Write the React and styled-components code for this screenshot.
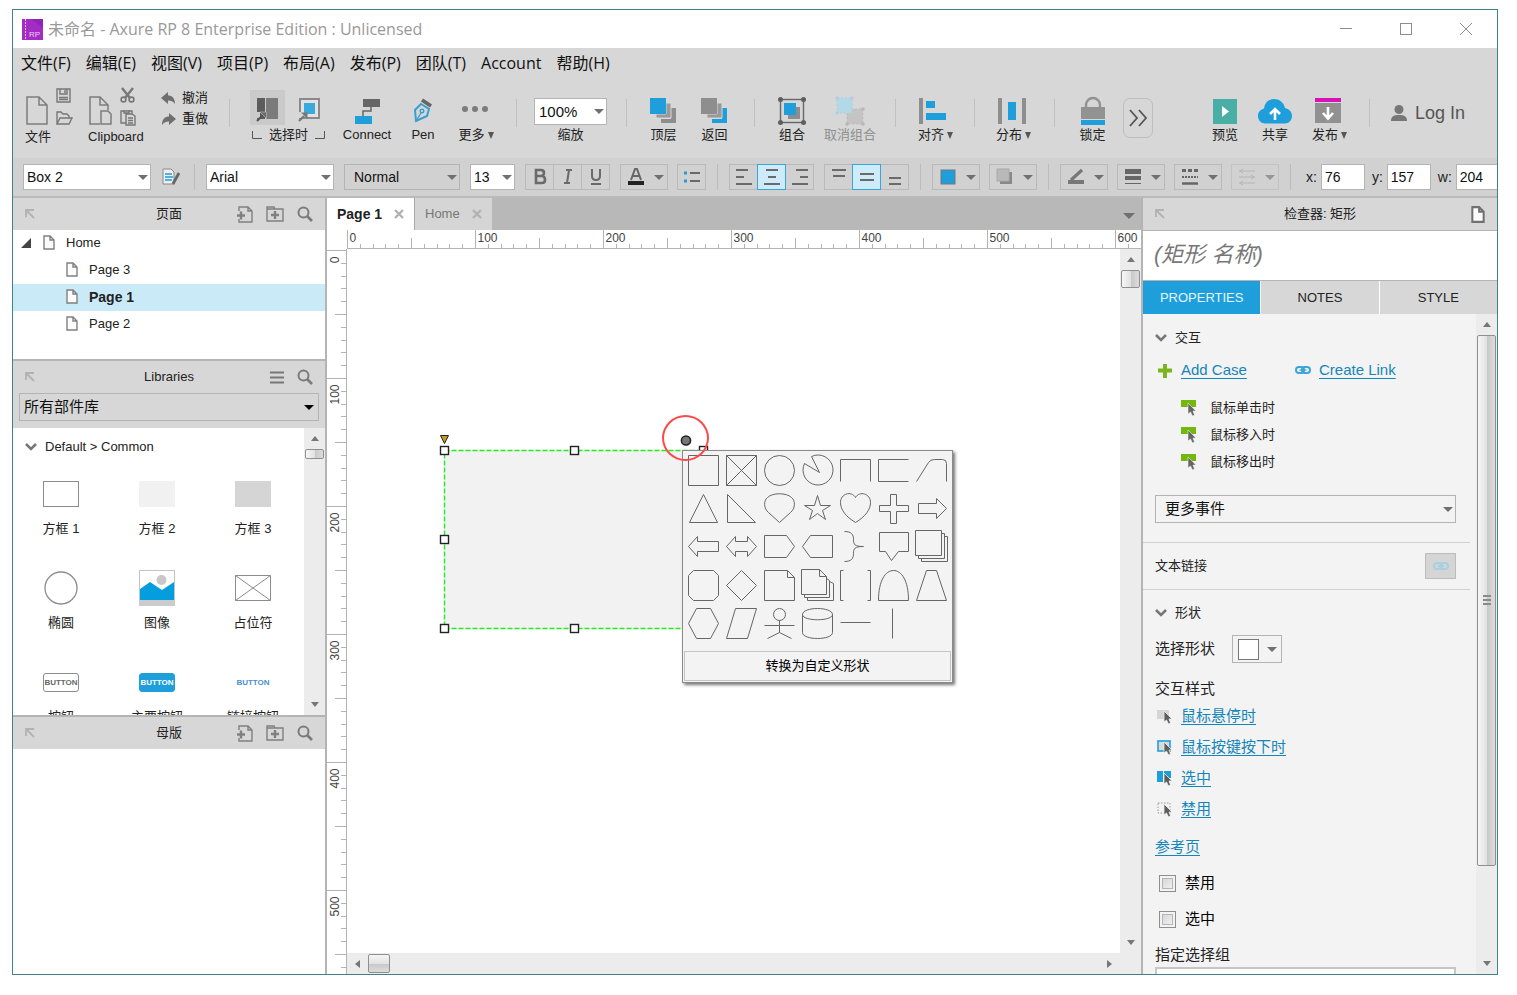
import React, { useEffect, useRef, useState } from 'react';
import styled, { createGlobalStyle, css } from 'styled-components';

const blue = '#1e9fdc';
const gray = '#8c8c8c';
const dark = '#6a6a6a';
const line = '#b4b4b4';
const panel = '#d7d7d7';
const uiFont = '"Liberation Sans", "Noto Sans CJK SC", sans-serif';
const menuFont = '"Open Sans", "Noto Sans CJK SC", sans-serif';
const SCALE = 1.28;

const GlobalStyle = createGlobalStyle`
  * { box-sizing: border-box; }
  body { margin: 0; background: #fff; }
  button, input, select { font: inherit; color: inherit; margin: 0; }
  button { padding: 0; border: 0; background: none; }
  svg { display: block; flex: none; overflow: visible; }
`;

const Window = styled.div`
  display: flex;
  flex-direction: column;
  height: calc(100vh - 29px);
  margin: 9px 19px 20px 12px;
  border: 1px solid #41828a;
  background: ${panel};
  color: #222;
  font: 13px/20px ${uiFont};
  overflow: hidden;
`;

/* title and menu */

const TitleBar = styled.header`
  display: flex;
  align-items: center;
  flex: none;
  height: 38px;
  padding: 0 24px 0 9px;
  gap: 5px;
  background: #fff;
  color: #999;
  font: 16px/24px ${menuFont};
  h1 { flex: 1; margin: 0; font: inherit; white-space: nowrap; }
`;

const WindowButtons = styled.div`
  display: flex;
  gap: 46px;
`;

const MenuBar = styled.nav`
  display: flex;
  align-items: center;
  flex: none;
  gap: 15px;
  height: 30px;
  padding-left: 8px;
  color: #111;
  font: 16px/24px ${menuFont};
`;

/* main toolbar */

const Toolbar = styled.div`
  display: flex;
  align-items: flex-start;
  flex: none;
  height: 80px;
`;

const Section = styled.div`
  display: flex;
  flex: none;
  align-items: flex-start;
  gap: ${p => p.$gap || 0}px;
  padding: 9px ${p => p.$right || 0}px 0 ${p => p.$left || 0}px;
`;

const Spacer = styled.div`
  flex: 1;
`;

const Separator = styled.div`
  flex: none;
  width: 1px;
  height: 28px;
  margin-top: 21px;
  background: #c0c0c0;
`;

const ToolButton = styled.button`
  display: flex;
  flex-direction: column;
  align-items: center;
  flex: none;
  width: ${p => p.$width}px;
  padding-top: 10px;
  color: ${p => (p.disabled ? '#8f8f8f' : '#222')};
  white-space: nowrap;
`;

const IconBox = styled.span`
  display: flex;
  align-items: center;
  justify-content: center;
  height: 28px;
`;

const ToolLabel = styled.span`
  display: flex;
  align-items: center;
  justify-content: center;
  gap: 3px;
  height: 20px;
`;

const FileGroup = styled.div`
  width: ${p => p.$width}px;
`;

const FileIcons = styled.div`
  display: flex;
  gap: 8px;
  height: 40px;
  padding: 7px 0 0 1px;
`;

const SmallIcons = styled.div`
  display: flex;
  flex-direction: column;
  gap: 7px;
  margin-top: -6px;
  button { display: block; height: 15px; }
`;

const UndoColumn = styled.div`
  width: 48px;
  button { display: flex; align-items: center; gap: 6px; height: 21px; white-space: nowrap; }
`;

const ModeGroup = styled.div`
  width: 77px;
`;

const ModeRow = styled.div`
  display: flex;
  gap: 8px;
  padding-top: 3px;
`;

const ModeButton = styled.button`
  display: flex;
  align-items: center;
  justify-content: center;
  width: 35px;
  height: 35px;
  padding-top: 4px;
  background: ${p => (p.$on ? '#cacaca' : 'none')};
`;

const ZoomBox = styled.div`
  width: 73px;
  padding-top: 11px;
  text-align: center;
`;

const ExpandButton = styled.button`
  display: flex;
  align-items: center;
  justify-content: center;
  width: 30px;
  height: 40px;
  margin-top: 11px;
  border: 1px solid #bdbdbd;
  border-radius: 7px;
`;

const LoginButton = styled.button`
  display: flex;
  align-items: center;
  gap: 8px;
  height: 28px;
  margin-top: 12px;
  color: #555;
  font-size: 18px;
  white-space: nowrap;
`;

/* format bar */

const FormatBar = styled.div`
  display: flex;
  align-items: center;
  flex: none;
  gap: 10px;
  height: 40px;
  padding-left: 10px;
  border-bottom: 2px solid #bababa;
  background: #d1d1d1;
  overflow: hidden;
`;

const BarSeparator = styled.div`
  flex: none;
  width: 1px;
  height: 26px;
  margin: 0 1px;
  background: #bcbcbc;
`;

const SelectWrap = styled.div`
  display: grid;
  flex: none;
  align-items: center;
  width: ${p => p.$width || '100%'};
  > * { grid-area: 1 / 1; }
  > svg { justify-self: end; margin-right: ${p => p.$arrow || 3}px; pointer-events: none; }
  select {
    appearance: none;
    width: 100%;
    height: ${p => p.$height || 26}px;
    padding: 0 16px 0 ${p => p.$pad || 3}px;
    border: 1px solid ${line};
    border-radius: 0;
    background: ${p => p.$bg || '#fff'};
    color: #111;
    font-size: ${p => p.$font || 14}px;
  }
`;

const ButtonGroup = styled.div`
  display: flex;
  flex: none;
`;

const FormatButton = styled.button`
  display: flex;
  align-items: center;
  justify-content: ${p => (p.$menu ? 'space-between' : 'center')};
  flex: none;
  width: ${p => (p.$menu ? 48 : 29)}px;
  height: 26px;
  padding: ${p => (p.$menu ? '0 3px 0 7px' : '0')};
  border: 1px solid #b9b9b9;
  opacity: ${p => (p.disabled ? 0.6 : 1)};
  & + & { margin-left: -1px; }
  ${p => p.$on && css`
    position: relative;
    border-color: #3aa5d8;
    background: #cdebf8;
  `}
`;

const Coordinates = styled.div`
  display: flex;
  flex: none;
  gap: 7px;
  padding-left: 4px;
  label { display: flex; align-items: center; gap: 4px; font-size: 14px; }
  input {
    width: 44px;
    height: 26px;
    padding: 0 3px;
    border: 1px solid ${line};
    font-size: 14px;
    color: #111;
  }
`;

/* workspace */

const Workspace = styled.main`
  display: grid;
  grid-template-columns: 314px minmax(0, 1fr) 356px;
  flex: 1;
  min-height: 0;
`;

const Sidebar = styled.aside`
  display: flex;
  flex-direction: column;
  min-height: 0;
  border-right: 2px solid ${line};
  background: #fff;
`;

const PaneHeader = styled.div`
  display: grid;
  grid-template-columns: 82px 1fr 82px;
  align-items: center;
  flex: none;
  height: 32px;
  padding: 0 12px;
  background: ${panel};
  h2 { margin: 0; font: inherit; text-align: center; }
`;

const PaneActions = styled.div`
  display: flex;
  justify-content: flex-end;
  align-items: center;
  gap: 13px;
`;

const Tree = styled.ul`
  flex: none;
  height: 131px;
  margin: 0;
  padding: 0;
  border-bottom: 2px solid ${line};
  list-style: none;
`;

const TreeRow = styled.li`
  display: flex;
  align-items: center;
  gap: 11px;
  height: 27px;
  padding: 0 0 2px ${p => (p.$root ? 8 : 53)}px;
  background: ${p => (p.$on ? '#cbeaf7' : 'none')};
  font-weight: ${p => (p.$on ? 'bold' : 'normal')};
  font-size: ${p => (p.$on ? 14 : 13)}px;
`;

const LibraryPicker = styled.div`
  flex: none;
  padding: 0 6px 7px;
  background: ${panel};
`;

const LibraryBody = styled.div`
  display: grid;
  grid-template-columns: 1fr 21px;
  flex: none;
  height: 289px;
  border-bottom: 2px solid ${line};
  overflow: hidden;
`;

const LibraryList = styled.div`
  min-height: 0;
  overflow: hidden;
`;

const SectionTitle = styled.h3`
  display: flex;
  align-items: center;
  gap: 8px;
  height: ${p => p.$height || 24}px;
  margin: 0;
  padding-left: ${p => p.$left || 0}px;
  font: inherit;
`;

const WidgetGrid = styled.div`
  display: grid;
  grid-template-columns: repeat(3, 1fr);
  grid-auto-rows: 94px;
  padding-right: 3px;
`;

const Widget = styled.button`
  display: flex;
  flex-direction: column;
  align-items: center;
  justify-content: flex-start;
  gap: 7px;
  padding-top: 11px;
  > span:first-child { display: flex; align-items: center; height: 36px; }
`;

const ButtonSample = styled.span`
  width: 36px;
  height: 19px;
  border: 1px solid ${p => p.$border};
  border-radius: 3px;
  background: ${p => p.$bg};
  color: ${p => p.$color};
  font-size: 8px;
  font-weight: bold;
  line-height: 18px;
  text-align: center;
`;

/* scroll bars */

const Track = styled.div`
  display: flex;
  flex-direction: ${p => (p.$horizontal ? 'row' : 'column')};
  align-items: center;
  min-width: 0;
  min-height: 0;
  background: #ececec;
`;

const Arrow = styled.div`
  display: flex;
  align-items: center;
  justify-content: center;
  flex: none;
  width: 21px;
  height: 21px;
`;

const Thumb = styled.div`
  display: flex;
  align-items: center;
  justify-content: center;
  flex: none;
  width: ${p => (p.$horizontal ? p.$size : '19px')};
  height: ${p => (p.$horizontal ? '19px' : p.$size)};
  border: 1px solid #8f8f8f;
  border-radius: 2px;
  background: linear-gradient(${p => (p.$horizontal ? '180deg' : '90deg')}, #f6f6f6, #e2e2e2 50%, #c9c9c9 55%, #dcdcdc);
`;

/* canvas */

const Editor = styled.section`
  display: flex;
  flex-direction: column;
  min-height: 0;
  background: #fff;
`;

const TabBar = styled.div`
  display: flex;
  flex: none;
  height: 32px;
  padding-right: 6px;
  background: #b8b8b8;
`;

const PageTab = styled.button`
  display: flex;
  align-items: center;
  justify-content: space-between;
  width: ${p => p.$width}px;
  padding: 0 10px;
  background: ${p => (p.$on ? '#fff' : '#d5d5d5')};
  color: ${p => (p.$on ? '#222' : '#777')};
  font-size: ${p => (p.$on ? 14 : 13)}px;
  font-weight: ${p => (p.$on ? 'bold' : 'normal')};
  border-left: ${p => (p.$on ? 0 : 1)}px solid #aaa;
`;

const TabMenu = styled.button`
  display: flex;
  align-items: center;
  margin-left: auto;
  padding-top: 4px;
`;

const CanvasGrid = styled.div`
  display: grid;
  grid-template-columns: 20px minmax(0, 1fr) 21px;
  grid-template-rows: 19px minmax(0, 1fr) 21px;
  grid-template-areas:
    'corner top top'
    'side canvas vertical'
    'side horizontal end';
  flex: 1;
  min-height: 0;
  background: #ececec;
`;

const Corner = styled.div`
  grid-area: corner;
  background: #fff;
`;

const TopRuler = styled.div`
  grid-area: top;
  min-width: 0;
  border-bottom: 1px solid ${line};
  background: #fff;
  overflow: hidden;
`;

const SideRuler = styled.div`
  grid-area: side;
  min-height: 0;
  border-right: 1px solid ${line};
  background: #fff;
  overflow: hidden;
`;

const Canvas = styled.div`
  position: relative;
  grid-area: canvas;
  background: #fff;
  overflow: hidden;
`;

const SelectedBox = styled.div`
  position: absolute;
  left: 97px;
  top: 201px;
  width: 262px;
  height: 179px;
  background: #f2f2f2;
`;

const ShapeMenu = styled.div`
  position: absolute;
  left: 335px;
  top: 201px;
  width: 271px;
  padding: 0 1px 1px;
  border: 1px solid #8a8a8a;
  background: #f3f3f3;
  box-shadow: 2px 2px 3px #777;
`;

const ShapeGrid = styled.div`
  display: grid;
  grid-template-columns: repeat(7, 1fr);
  grid-template-rows: repeat(5, 1fr);
  height: 192px;
  button { display: flex; align-items: center; justify-content: center; }
`;

const ConvertButton = styled.button`
  width: 100%;
  height: 30px;
  margin-top: 8px;
  border: 1px solid #c4c4c4;
  color: #000;
`;

const RedCircle = styled.div`
  position: absolute;
  left: 315px;
  top: 166px;
  width: 47px;
  height: 46px;
  border: 2px solid #fa4b4b;
  border-radius: 50%;
  pointer-events: none;
`;

/* inspector */

const Inspector = styled.aside`
  display: flex;
  flex-direction: column;
  min-height: 0;
  border-left: 2px solid ${line};
  background: #fff;
`;

const NameInput = styled.input`
  flex: none;
  height: 51px;
  padding: 0 11px 2px;
  border: solid ${line};
  border-width: 1px 0;
  font-size: 22px;
  font-style: italic;
  &::placeholder { color: #777; opacity: 1; }
`;

const InspectorTabs = styled.div`
  display: grid;
  grid-template-columns: repeat(3, 1fr);
  flex: none;
  gap: 1px;
  height: 33px;
`;

const InspectorTab = styled.button`
  background: ${p => (p.$on ? blue : panel)};
  color: ${p => (p.$on ? '#e6f5fc' : '#222')};
`;

const InspectorBody = styled.div`
  display: grid;
  grid-template-columns: minmax(0, 1fr) 21px;
  flex: 1;
  min-height: 0;
  background: #f3f3f3;
`;

const Properties = styled.div`
  padding: 12px 6px 0 0;
  overflow: hidden;
`;

const Block = styled.div`
  padding: ${p => p.$top || 0}px 14px ${p => p.$bottom || 0}px 12px;
  border-bottom: ${p => (p.$line ? 1 : 0)}px solid #cfcfcf;
`;

const Row = styled.div`
  display: flex;
  align-items: center;
  gap: ${p => p.$gap || 8}px;
  height: ${p => p.$height || 24}px;
  margin-top: ${p => p.$top || 0}px;
  padding-left: ${p => p.$indent || 0}px;
  font-size: ${p => (p.$small ? 13 : 15)}px;
`;

const Link = styled.a`
  color: #1586b8;
  font-size: 15px;
  text-decoration: underline;
  text-underline-offset: 3px;
`;

const LinkPair = styled.div`
  display: grid;
  grid-template-columns: 138px 1fr;
`;

const LinkButton = styled.button`
  display: flex;
  align-items: center;
  justify-content: center;
  width: 31px;
  height: 26px;
  margin-left: auto;
  border: 1px solid #bcbcbc;
  background: #d5d5d5;
`;

const ShapeButton = styled.button`
  display: flex;
  align-items: center;
  justify-content: space-between;
  width: 50px;
  height: 28px;
  margin-left: 9px;
  padding: 0 4px 0 5px;
  border: 1px solid ${line};
`;

const Check = styled.label`
  display: flex;
  align-items: center;
  gap: 9px;
  height: 24px;
  margin-top: ${p => p.$top}px;
  padding-left: 4px;
  color: #000;
  font-size: 15px;
  input {
    appearance: none;
    width: 17px;
    height: 17px;
    border: 1px solid #8e8e8e;
    background: linear-gradient(135deg, #ccd0d6, #f6f6f6);
    box-shadow: inset 0 0 0 2px #f3f3f3, inset 0 0 0 3px #b5b5b5;
  }
`;

const GroupInput = styled.input`
  display: block;
  width: 100%;
  height: 26px;
  border: 2px solid #c6c6c6;
  background: #fff;
`;

/* icons */

const Caret = ({ color = '#707070', size = 10 }) => (
  <svg width={size} height={size / 2} viewBox="0 0 10 5"><path d="M0 0H10L5 5Z" fill={color} /></svg>
);

const DownMark = () => (
  <svg width="6" height="7" viewBox="0 0 6 7"><path d="M0 0H6L3 7Z" fill="#555" /></svg>
);

const Chevron = () => (
  <svg width="12" height="8" viewBox="0 0 12 8"><path d="M1 1L6 6L11 1" fill="none" stroke="#777" strokeWidth="2.6" /></svg>
);

const DockIcon = () => (
  <svg width="10" height="10" viewBox="0 0 10 10" fill="none" stroke="#b2b2b2" strokeWidth="1.8">
    <path d="M1 8V1H9M1 1L9 9" />
  </svg>
);

const SearchIcon = () => (
  <svg width="16" height="16" viewBox="0 0 16 16" fill="none" stroke="#7b7b7b">
    <circle cx="6.5" cy="6.5" r="5" strokeWidth="2" /><path d="M10 10L15 15" strokeWidth="2.6" />
  </svg>
);

const AddPageIcon = () => (
  <svg width="16" height="17" viewBox="0 0 16 17" fill="none" stroke="#808080" strokeWidth="1.4">
    <path d="M2 5V1H11L15 5V16H2V13M11 1V5H15" /><path d="M0 9.5H8M4 5.5V13.5" strokeWidth="2.4" />
  </svg>
);

const AddFolderIcon = () => (
  <svg width="18" height="16" viewBox="0 0 18 16" fill="none" stroke="#808080" strokeWidth="1.4">
    <path d="M1 15V1H8L9 3H17V15ZM1 3H9" /><path d="M5 9H13M9 5V13" strokeWidth="2.4" />
  </svg>
);

const ListIcon = () => (
  <svg width="14" height="13" viewBox="0 0 14 13" stroke="#777" strokeWidth="2.2"><path d="M0 1.5H14M0 6.5H14M0 11.5H14" /></svg>
);

const PageIcon = ({ width = 12, height = 15, stroke = '#808080', strokeWidth = 1.4 }) => (
  <svg width={width} height={height} viewBox="0 0 12 15" fill="#fbfbfb" stroke={stroke} strokeWidth={strokeWidth}>
    <path d="M1 1H7L11 5V14H1ZM7 1V5H11" />
  </svg>
);

const Logo = () => (
  <svg width="21" height="21" viewBox="0 0 21 21">
    <rect width="21" height="21" fill="#a32cc4" />
    <path d="M9 0H21V9Z" fill="#8a22ad" opacity=".7" />
    <path d="M3.5 0V21" stroke="#e6b6f2" strokeDasharray="2 1" />
    <text x="7" y="18" fill="#f0d2f8" fontSize="8" fontFamily="Liberation Sans">RP</text>
  </svg>
);

const FileIcon = () => (
  <svg width="22" height="29" viewBox="0 0 22 29" fill="none" stroke="#7d7d7d" strokeWidth="1.5">
    <path d="M1 1H13L21 9V28H1ZM13 1V9H21" />
  </svg>
);

const SaveIcon = () => (
  <svg width="15" height="15" viewBox="0 0 15 15" fill="none" stroke="#777" strokeWidth="1.4">
    <path d="M1 1H14V14H1ZM4 1V6H11V1M9 2V5M3 9.500H12M3 11.500H12" />
  </svg>
);

const OpenIcon = () => (
  <svg width="17" height="14" viewBox="0 0 17 14" fill="none" stroke="#777" strokeWidth="1.4">
    <path d="M1 13V1H5L7 3H11L13 5V7M1 13L4 7H16L13 13Z" />
  </svg>
);

const ClipIcon = () => (
  <svg width="23" height="29" viewBox="0 0 23 29" fill="none" stroke="#7d7d7d" strokeWidth="1.5">
    <path d="M11 28H1V1H11L19 9V14M11 1V9H19M12 15H19L22 18V28H12Z" />
  </svg>
);

const ScissorsIcon = () => (
  <svg width="15" height="15" viewBox="0 0 15 15" fill="none" stroke="#777" strokeWidth="2.4">
    <path d="M2 0L10 10M13 0L5 10" /><circle cx="3.5" cy="11.5" r="2.4" strokeWidth="1.6" /><circle cx="11.5" cy="11.5" r="2.4" strokeWidth="1.6" />
  </svg>
);

const PasteIcon = () => (
  <svg width="16" height="15" viewBox="0 0 16 15" fill="none" stroke="#777" strokeWidth="1.4">
    <path d="M6 13H1V1H12V4M4 0V3H9V0M6 4H12L15 6V15H6ZM8 8H13M8 10.500H13M8 13H13" />
  </svg>
);

const UndoIcon = ({ flip }) => (
  <svg width="15" height="12" viewBox="0 0 15 12">
    <path d="M0 6L7 0V3.500C11 3.500 14 6 14 12C12 9 10 8.500 7 8.500V12Z" fill="#6f6f6f" transform={flip ? 'translate(15 0) scale(-1 1)' : undefined} />
  </svg>
);

const IntersectIcon = () => (
  <svg width="21" height="23" viewBox="0 0 21 23">
    <rect width="8" height="21" fill="#5c5c5c" /><rect x="9" width="12" height="21" fill="#7b7b7b" />
    <path d="M0 14H3V20H0Z" fill="#cacaca" />
    <path d="M0 23L6 17" stroke="#555" strokeWidth="2.2" /><path d="M3 14H9.500V20.500Z" fill="#6b6b6b" stroke="#a9a9a9" strokeWidth=".8" />
  </svg>
);

const ContainIcon = () => (
  <svg width="21" height="23" viewBox="0 0 21 23">
    <rect x="1" y="1" width="19" height="19" fill="#e2e2e2" stroke="#8a8a8a" strokeWidth="2" />
    <rect x="5" y="5" width="11" height="11" fill="#38aade" />
    <path d="M0 14H3V20H0Z" fill={panel} />
    <path d="M0 23L5 18" stroke="#777" strokeWidth="2.2" /><path d="M2 14.500H8.500V21Z" fill="#777" />
  </svg>
);

const SelectLabelIcon = ({ right }) => (
  <svg width="10" height="8" viewBox="0 0 10 8" fill="none" stroke="#555"><path d={right ? 'M9.500 0V7.500H0' : 'M.5 0V7.500H10'} /></svg>
);

const ConnectIcon = () => (
  <svg width="25" height="25" viewBox="0 0 25 25">
    <rect x="8" width="17" height="8" fill="#666" /><rect y="17" width="17" height="8" fill={blue} />
    <path d="M16 8V12H8V17" fill="none" stroke="#666" strokeWidth="1.5" />
  </svg>
);

const PenIcon = () => (
  <svg width="18" height="24" viewBox="0 0 18 24">
    <path d="M8 1L17 7" stroke="#666" strokeWidth="3.8" />
    <path d="M7 5L15 10L13 17L2 22L1 11Z" fill="none" stroke="#3a9fd0" strokeWidth="2" />
    <path d="M2 22L7 14" stroke="#3a9fd0" strokeWidth="1.4" /><circle cx="8" cy="12" r="1.8" fill="none" stroke="#3a9fd0" strokeWidth="1.4" />
  </svg>
);

const DotsIcon = () => (
  <svg width="28" height="8" viewBox="0 0 28 8" fill="#7c7c7c"><circle cx="3" cy="2" r="3" /><circle cx="13" cy="2" r="3" /><circle cx="23" cy="2" r="3" /></svg>
);

const LayerIcon = ({ back }) => (
  <svg width="27" height="26" viewBox="0 0 27 26">
    <path d="M21 10H26V25H11V21H21Z" fill={back ? blue : '#8e8e8e'} />
    <path d="M16 5H21V20H6V16H16Z" fill="#999" stroke={panel} />
    <rect width="16" height="16" fill={back ? '#8e8e8e' : blue} />
  </svg>
);

const GroupIcon = () => (
  <svg width="28" height="28" viewBox="0 0 28 28">
    <rect x="10" y="10" width="12" height="12" fill="#8d8d8d" /><rect x="6" y="6" width="12" height="12" fill={blue} />
    <rect x="2.500" y="2.500" width="23" height="23" fill="none" stroke="#666" strokeWidth="1.4" />
    <g fill="#5e5e5e"><circle cx="2.500" cy="2.500" r="2.500" /><circle cx="25.500" cy="2.500" r="2.500" /><circle cx="2.500" cy="25.500" r="2.500" /><circle cx="25.500" cy="25.500" r="2.500" /></g>
  </svg>
);

const UngroupIcon = () => (
  <svg width="28" height="28" viewBox="0 0 28 28">
    <path d="M11 12H27V27H11Z" fill="#c4c4c4" stroke="#bcbcbc" strokeDasharray="2 2" />
    <rect x="1" y="1" width="15" height="15" fill="#b3d8e8" stroke="#b0cedb" strokeDasharray="2 2" />
    <g fill="#b8cdd6"><circle cx="1" cy="1" r="1.800" /><circle cx="16" cy="1" r="1.800" /><circle cx="1" cy="16" r="1.800" /></g>
    <g fill="#b8b8b8"><circle cx="27" cy="12" r="1.800" /><circle cx="27" cy="27" r="1.800" /><circle cx="11" cy="27" r="1.800" /></g>
  </svg>
);

const AlignIcon = () => (
  <svg width="33" height="27" viewBox="0 0 33 27">
    <rect width="4" height="26" fill="#8e8e8e" /><rect x="7" y="3" width="9" height="7" fill={blue} /><rect x="7" y="15" width="20" height="7" fill={blue} />
  </svg>
);

const DistributeIcon = () => (
  <svg width="31" height="27" viewBox="0 0 31 27">
    <rect width="4" height="26" fill="#8e8e8e" /><rect x="24" width="4" height="26" fill="#8e8e8e" /><rect x="10" y="4" width="8" height="18" fill={blue} />
  </svg>
);

const LockIcon = () => (
  <svg width="24" height="28" viewBox="0 0 24 28">
    <path d="M5 11V8A7 7 0 0 1 19 8V11" fill="none" stroke="#929292" strokeWidth="2.4" />
    <rect y="10" width="24" height="12" fill="#929292" /><rect y="23" width="24" height="5" fill={blue} />
  </svg>
);

const MoreIcon = () => (
  <svg width="19" height="16" viewBox="0 0 19 16" fill="none" stroke="#555" strokeWidth="1.8"><path d="M1 0L8 8L1 16M10 0L17 8L10 16" /></svg>
);

const PreviewIcon = () => (
  <svg width="24" height="25" viewBox="0 0 24 25"><rect width="24" height="25" fill="#49aea5" /><path d="M9 7L16 12.500L9 18Z" fill="#fff" /></svg>
);

const ShareIcon = () => (
  <svg width="34" height="25" viewBox="0 0 34 25">
    <path d="M7 24.500C3 24.500 0 21 0 17C0 13 2 11 6 9.500C7 3 11 0 16 0C22 0 26 4 27 9C31 10 34 12.500 34 17C34 21 31 24.500 27 24.500Z" fill={blue} />
    <path d="M17 21V11M12 15L17 10L22 15" fill="none" stroke="#fff" strokeWidth="2.6" />
  </svg>
);

const PublishIcon = () => (
  <svg width="32" height="26" viewBox="0 0 32 26">
    <rect x="2" width="26" height="4" fill="#d813b6" /><rect x="2" y="5" width="26" height="20" fill="#919191" />
    <path d="M15 9V20M10 15L15 20.500L20 15" fill="none" stroke="#fff" strokeWidth="2.6" />
  </svg>
);

const UserIcon = () => (
  <svg width="16" height="17" viewBox="0 0 16 17" fill="#777"><circle cx="8" cy="4.500" r="4.500" /><path d="M0 16C0 11 3 10 8 10S16 11 16 16Z" /></svg>
);

const StyleIcon = () => (
  <svg width="22" height="18" viewBox="0 0 22 18" fill="none">
    <path d="M2 1H10L13 4V16H2Z" fill="#eee" stroke="#888" /><path d="M4 6H11M4 9H12M4 12H11" stroke={blue} strokeWidth="1.6" />
    <path d="M18 5L13 14L12 16" stroke="#666" strokeWidth="2.8" />
  </svg>
);

const ListStyleIcon = () => (
  <svg width="16" height="12" viewBox="0 0 16 12" stroke={dark} strokeWidth="2"><path d="M6 2H16M6 10H16" /><path d="M0 2H3M0 10H3" stroke={blue} strokeWidth="3" /></svg>
);

const Lines = ({ d, weight = 2 }) => (
  <svg width="16" height="18" viewBox="0 0 16 18" fill="none" stroke={dark} strokeWidth={weight}><path d={d} /></svg>
);

const FontColorIcon = () => (
  <svg width="16" height="18" viewBox="0 0 16 18">
    <path d="M3 12L7 1H9L13 12M5 8H11" fill="none" stroke="#666" strokeWidth="2" /><rect y="13" width="16" height="4" fill="#222" />
  </svg>
);

const FillIcon = () => (
  <svg width="16" height="16" viewBox="0 0 16 16"><rect x="1" y="1" width="14" height="14" fill={blue} stroke="#777" /></svg>
);

const ShadowIcon = () => (
  <svg width="16" height="16" viewBox="0 0 16 16"><rect x="3" y="3" width="12" height="12" fill="#888" /><rect width="12" height="12" fill="#b9b9b9" stroke="#aaa" /></svg>
);

const LineColorIcon = () => (
  <svg width="16" height="16" viewBox="0 0 16 16"><path d="M0 13H16" stroke="#777" strokeWidth="4" /><path d="M3 11L14 1" stroke="#777" strokeWidth="3.2" /></svg>
);

const LineWidthIcon = () => (
  <svg width="16" height="16" viewBox="0 0 16 16" fill="#666"><rect width="16" height="5" /><rect y="7" width="16" height="4" /><rect y="14" width="16" height="1" /></svg>
);

const LineStyleIcon = () => (
  <svg width="16" height="16" viewBox="0 0 16 16" stroke="#666"><path d="M0 1.500H16" strokeWidth="3" strokeDasharray="4 2" /><path d="M0 8H16" strokeWidth="2" strokeDasharray="2 1" /><path d="M0 14.500H16" strokeWidth="2.500" /></svg>
);

const LineEndIcon = () => (
  <svg width="16" height="16" viewBox="0 0 16 16" fill="none" stroke="#a5a5a5"><path d="M0 2H16M0 8H16M0 14H16M4 0L1 2L4 4M12 6L15 8L12 10M4 12L1 14L4 16" /></svg>
);

const LinkIcon = ({ color = '#3aa5d8' }) => (
  <svg width="16" height="8" viewBox="0 0 16 8" fill="none" stroke={color} strokeWidth="2">
    <rect x="1" y="1" width="8" height="6" rx="3" /><rect x="7" y="1" width="8" height="6" rx="3" /><path d="M4.500 4H11.500" strokeWidth="1.400" />
  </svg>
);

const PlusIcon = () => (
  <svg width="16" height="15" viewBox="0 0 16 15"><path d="M1 7.500H15M8 1V15" stroke="#7ab51d" strokeWidth="4" /></svg>
);

const CURSOR = 'M7 3V14L9.500 12L11.500 16L13.500 15L12 11H15Z';

const EventIcon = () => (
  <svg width="16" height="16" viewBox="0 0 16 16"><rect width="15" height="7" fill="#74b80e" /><path d={CURSOR} fill="#666" stroke="#eee" strokeWidth=".6" /></svg>
);

const StateIcon = ({ kind }) => (
  <svg width="16" height="16" viewBox="0 0 16 16">
    {kind === 'over' && <rect y="2" width="12" height="9" fill="#d5d5d5" />}
    {kind === 'down' && <rect x="1" y="2" width="12" height="10" fill="#d9d9d9" stroke={blue} strokeWidth="1.6" />}
    {kind === 'selected' && <><rect y="1" width="6" height="11" fill={blue} /><rect x="7" y="1" width="7" height="7" fill={blue} /></>}
    {kind === 'disabled' && <rect x="1" y="2" width="12" height="10" fill="none" stroke="#999" strokeDasharray="1.500 1.500" />}
    <path d={CURSOR} fill="#5e5e5e" stroke="#eee" strokeWidth=".8" />
  </svg>
);

const ScrollArrow = ({ dir }) => {
  const paths = { up: 'M0 5H8L4 0Z', down: 'M0 0H8L4 5Z', left: 'M5 0V8L0 4Z', right: 'M0 0V8L5 4Z' };
  const upright = dir === 'up' || dir === 'down';
  return (
    <Arrow>
      <svg width={upright ? 8 : 5} height={upright ? 5 : 8}><path d={paths[dir]} fill="#777" /></svg>
    </Arrow>
  );
};

const ScrollBar = ({ horizontal, size, grip }) => (
  <Track $horizontal={horizontal}>
    <ScrollArrow dir={horizontal ? 'left' : 'up'} />
    <Thumb $size={size} $horizontal={horizontal}>
      {grip && <svg width="8" height="11" stroke="#8a8a8a" strokeWidth="2"><path d="M0 1H8M0 5H8M0 9H8" /></svg>}
    </Thumb>
    <Spacer />
    <ScrollArrow dir={horizontal ? 'right' : 'down'} />
  </Track>
);

/* rulers */

function tickLength(i) {
  if (i % 10 === 0) return 19;
  return i % 5 === 0 ? 11 : 5;
}

// one tick for every 10 units that fit in the ruler
function useTicks(side) {
  const ref = useRef(null);
  const [count, setCount] = useState(0);
  useEffect(() => {
    const measure = () => setCount(Math.ceil(ref.current[side] / (10 * SCALE)));
    measure();
    window.addEventListener('resize', measure);
    return () => window.removeEventListener('resize', measure);
  }, [side]);
  return [ref, Array.from({ length: count }, (_, i) => i)];
}

const HorizontalRuler = () => {
  const [ref, ticks] = useTicks('clientWidth');
  return (
    <TopRuler ref={ref}>
      <svg width="100%" height="19" fontSize="12" fill="#444">
        {ticks.map(i => {
          const x = Math.round(i * 10 * SCALE) + 0.5;
          return (
            <g key={i}>
              <path d={`M${x} 19V${19 - tickLength(i)}`} stroke={line} />
              {i % 10 === 0 && <text x={x + 2} y="12">{i * 10}</text>}
            </g>
          );
        })}
      </svg>
    </TopRuler>
  );
};

const VerticalRuler = () => {
  const [ref, ticks] = useTicks('clientHeight');
  return (
    <SideRuler ref={ref}>
      <svg width="19" height="100%" fontSize="12" fill="#444">
        {ticks.map(i => {
          const y = Math.round(i * 10 * SCALE) + 1.5;
          return (
            <g key={i}>
              <path d={`M19 ${y}H${19 - tickLength(i)}`} stroke={line} />
              {i % 10 === 0 && <text transform={`translate(12 ${y + 6}) rotate(-90)`} textAnchor="end">{i * 10}</text>}
            </g>
          );
        })}
      </svg>
    </SideRuler>
  );
};

/* shape picker */

const SHAPES = [
  ['矩形', 'M0 0H30V30H0Z'],
  ['占位符', 'M0 0H30V30H0ZM0 0L30 30M30 0L0 30'],
  ['椭圆', 'M15 0A15 15 0 1 1 15 30A15 15 0 1 1 15 0Z'],
  ['扇形', 'M17 17L9 1A15 15 0 1 1 2 8Z'],
  ['上框', 'M0 26V4H30V26'],
  ['左框', 'M30 4H0V26H30'],
  ['曲线', 'M0 26L12 7Q14 4 18 4H26Q30 4 30 8V26'],
  ['三角形', 'M15 1L29 29H1Z'],
  ['直角三角形', 'M1 1V29H29Z'],
  ['水滴', 'M15 29L4 19C-1 15 -1 7 3 4C8 -1 22 -1 27 4C31 7 31 15 26 19Z'],
  ['星形', 'M15 2L18 12H28L20 17L23 26L15 20L7 26L10 17L2 12H12Z'],
  ['心形', 'M15 29C5 23 0 16 0 9C0 0 11 -3 15 4C19 -3 30 0 30 9C30 16 25 23 15 29Z'],
  ['十字', 'M12 1H18V12H30V18H18V30H12V18H1V12H12Z'],
  ['右箭头', 'M2 10H20V5L30 15L20 25V20H2Z'],
  ['左箭头', 'M30 10H9V5L0 15L9 25V20H30Z'],
  ['双箭头', 'M0 15L9 5V10H21V5L30 15L21 25V20H9V25Z'],
  ['右标签', 'M0 4H22L30 15L22 26H0Z'],
  ['左标签', 'M30 4H8L0 15L8 26H30Z'],
  ['大括号', 'M4 0C11 0 13 3 13 8C13 13 14 15 23 15C14 15 13 17 13 22C13 27 11 30 4 30'],
  ['气泡', 'M1 1H30V20H20L13 29L7 20H1Z'],
  ['堆叠', 'M-1 -1H25V24H-1ZM25 2H28V27H2V24M28 5H31V30H5V27'],
  ['切角', 'M5 0H25L30 5V25L25 30H5L0 25V5Z'],
  ['菱形', 'M15 0L30 15L15 30L0 15Z'],
  ['文件', 'M0 0H23L30 7V30H0ZM23 0V7H30'],
  ['多文件', 'M-1 -1H17L24 6V24H-1ZM17 -1V6H24M24 8L27 10V27H2V24M27 11L31 13V30H5V27'],
  ['方括号', 'M3 0H0V30H3M27 0H30V30H27'],
  ['拱形', 'M0 30C0 10 7 0 15 0C23 0 30 10 30 30Z'],
  ['梯形', 'M10 0H20L30 30H0Z'],
  ['六边形', 'M8 0H22L30 15L22 30H8L0 15Z'],
  ['平行四边形', 'M9 0H30L21 30H0Z'],
  ['角色', 'M15 0A6 6 0 1 1 15 12A6 6 0 1 1 15 0ZM15 12V24M0 17H30M3 30L15 24L27 30'],
  ['数据库', 'M0 6C0 -2 30 -2 30 6C30 13 0 13 0 6V24C0 32 30 32 30 24V6'],
  ['水平线', 'M0 14H30'],
  ['垂直线', 'M14 0V30'],
];

const HANDLES = [[0, 0], [130, 0], [259, 0], [0, 89], [0, 178], [130, 178]];

const Selection = () => (
  <SelectedBox>
    <svg width="262" height="179">
      <rect x=".5" y=".5" width="260" height="178" fill="none" stroke="#1df01d" strokeWidth="1.4" strokeDasharray="5 2" />
      {HANDLES.map(([x, y]) => (
        <rect key={`${x}-${y}`} x={x - 3.5} y={y - 3.5} width="8" height="8" fill="#fff" stroke="#222" strokeWidth="1.4" />
      ))}
      <path d="M-3.500 -14.500H4.500L.5 -6.500Z" fill="#c79a1f" stroke="#222" />
      <circle cx="242" cy="-9.500" r="4.600" fill="#777" stroke="#222" strokeWidth="1.500" />
    </svg>
  </SelectedBox>
);

const WIDGETS = [
  ['方框 1', <svg width="36" height="26"><rect x=".5" y=".5" width="35" height="25" fill="#fff" stroke="#8c8c8c" /></svg>],
  ['方框 2', <svg width="36" height="26"><rect width="36" height="26" fill="#f1f1f1" /></svg>],
  ['方框 3', <svg width="36" height="26"><rect width="36" height="26" fill="#d5d5d5" /></svg>],
  ['椭圆', <svg width="34" height="34"><circle cx="17" cy="17" r="16" fill="none" stroke="#8c8c8c" strokeWidth="1.300" /></svg>],
  ['图像', (
    <svg width="36" height="36">
      <rect x=".5" y=".5" width="35" height="35" fill="#fff" stroke="#c4c4c4" />
      <circle cx="22.500" cy="10" r="5" fill="#c8c8c8" />
      <path d="M1 19L11 12L23 20L35 12V30H1Z" fill="#049ede" /><rect y="30" width="36" height="6" fill="#cbcbcb" />
    </svg>
  )],
  ['占位符', <svg width="36" height="26"><path d="M.5 .5H35.500V25.500H.5ZL35.500 25.500M35.500 .5L.5 25.500" fill="none" stroke="#8c8c8c" /></svg>],
  ['按钮', <ButtonSample $border="#8c8c8c" $bg="#fff" $color="#666">BUTTON</ButtonSample>],
  ['主要按钮', <ButtonSample $border={blue} $bg={blue} $color="#fff">BUTTON</ButtonSample>],
  ['链接按钮', <ButtonSample $border="transparent" $bg="none" $color="#4a8fd0">BUTTON</ButtonSample>],
];

const MENUS = ['文件(F)', '编辑(E)', '视图(V)', '项目(P)', '布局(A)', '发布(P)', '团队(T)', 'Account', '帮助(H)'];

const Tool = ({ width, icon, label, menu, disabled }) => (
  <ToolButton $width={width} disabled={disabled}>
    <IconBox>{icon}</IconBox>
    <ToolLabel>{label}{menu && <DownMark />}</ToolLabel>
  </ToolButton>
);

const Dropdown = ({ label, value, arrowColor, ...rest }) => (
  <SelectWrap {...rest}>
    <select aria-label={label} defaultValue={value}><option>{value}</option></select>
    <Caret color={arrowColor} />
  </SelectWrap>
);

const MenuButton = ({ label, icon, disabled }) => (
  <FormatButton $menu aria-label={label} disabled={disabled}>{icon}<Caret /></FormatButton>
);

const Pane = ({ title, children }) => (
  <PaneHeader>
    <DockIcon />
    <h2>{title}</h2>
    <PaneActions>{children}</PaneActions>
  </PaneHeader>
);

const PageActions = () => (
  <>
    <button aria-label="添加页面"><AddPageIcon /></button>
    <button aria-label="添加文件夹"><AddFolderIcon /></button>
    <button aria-label="搜索"><SearchIcon /></button>
  </>
);

const MainToolbar = () => (
  <Toolbar>
    <Section $left={12} $right={20} $gap={13}>
      <FileGroup $width={50}>
        <FileIcons>
          <button aria-label="新建"><FileIcon /></button>
          <SmallIcons>
            <button aria-label="保存"><SaveIcon /></button>
            <button aria-label="打开"><OpenIcon /></button>
          </SmallIcons>
        </FileIcons>
        文件
      </FileGroup>
      <FileGroup $width={60}>
        <FileIcons>
          <button aria-label="复制"><ClipIcon /></button>
          <SmallIcons>
            <button aria-label="剪切"><ScissorsIcon /></button>
            <button aria-label="粘贴"><PasteIcon /></button>
          </SmallIcons>
        </FileIcons>
        Clipboard
      </FileGroup>
      <UndoColumn>
        <button><UndoIcon />撤消</button>
        <button><UndoIcon flip />重做</button>
      </UndoColumn>
    </Section>
    <Separator />
    <Section $left={20} $right={19} $gap={16}>
      <ModeGroup>
        <ModeRow>
          <ModeButton $on aria-label="相交选中"><IntersectIcon /></ModeButton>
          <ModeButton aria-label="包含选中"><ContainIcon /></ModeButton>
        </ModeRow>
        <ToolLabel><SelectLabelIcon />&nbsp;选择时&nbsp;<SelectLabelIcon right /></ToolLabel>
      </ModeGroup>
      <Tool width={48} icon={<ConnectIcon />} label="Connect" />
      <Tool width={32} icon={<PenIcon />} label="Pen" />
      <Tool width={42} icon={<DotsIcon />} label="更多" menu />
    </Section>
    <Separator />
    <Section $left={17} $right={19}>
      <ZoomBox>
        <Dropdown label="缩放" value="100%" $height={27} $font={15} $pad={4} />
        缩放
      </ZoomBox>
    </Section>
    <Separator />
    <Section $left={23} $right={26} $gap={24}>
      <Tool width={27} icon={<LayerIcon />} label="顶层" />
      <Tool width={27} icon={<LayerIcon back />} label="返回" />
    </Section>
    <Separator />
    <Section $left={23} $right={20} $gap={19}>
      <Tool width={28} icon={<GroupIcon />} label="组合" />
      <Tool width={50} icon={<UngroupIcon />} label="取消组合" disabled />
    </Section>
    <Separator />
    <Section $left={22} $right={21}>
      <Tool width={35} icon={<AlignIcon />} label="对齐" menu />
    </Section>
    <Separator />
    <Section $left={21} $right={23}>
      <Tool width={35} icon={<DistributeIcon />} label="分布" menu />
    </Section>
    <Separator />
    <Section $left={25} $gap={18}>
      <Tool width={25} icon={<LockIcon />} label="锁定" />
      <ExpandButton aria-label="更多工具"><MoreIcon /></ExpandButton>
    </Section>
    <Spacer />
    <Section $right={22} $gap={20}>
      <Tool width={26} icon={<PreviewIcon />} label="预览" />
      <Tool width={34} icon={<ShareIcon />} label="共享" />
      <Tool width={35} icon={<PublishIcon />} label="发布" menu />
    </Section>
    <Separator />
    <Section $left={21} $right={32}>
      <LoginButton><UserIcon />Log In</LoginButton>
    </Section>
  </Toolbar>
);

const Formatting = () => (
  <FormatBar>
    <Dropdown label="样式" value="Box 2" $width="128px" />
    <button aria-label="管理样式"><StyleIcon /></button>
    <BarSeparator />
    <Dropdown label="字体" value="Arial" $width="128px" />
    <Dropdown label="字形" value="Normal" $width="116px" $pad={9} $bg="#d1d1d1" />
    <Dropdown label="字号" value="13" $width="45px" />
    <ButtonGroup>
      <FormatButton aria-label="粗体"><Lines weight={2.6} d="M4 2H9Q12 2 12 5Q12 8 9 8H4ZM4 8H10Q13 8 13 12Q13 15 10 15H4Z" /></FormatButton>
      <FormatButton aria-label="斜体"><Lines d="M6 2H12M9 2L7 15M4 15H10" /></FormatButton>
      <FormatButton aria-label="下划线"><Lines d="M4 1V8Q4 12 8 12Q12 12 12 8V1M3 16H13" /></FormatButton>
    </ButtonGroup>
    <MenuButton label="文字颜色" icon={<FontColorIcon />} />
    <FormatButton aria-label="项目符号"><ListStyleIcon /></FormatButton>
    <BarSeparator />
    <ButtonGroup>
      <FormatButton aria-label="左对齐"><Lines d="M0 2H12M0 9H8M0 16H16" /></FormatButton>
      <FormatButton $on aria-label="居中"><Lines d="M2 2H14M4 9H12M0 16H16" /></FormatButton>
      <FormatButton aria-label="右对齐"><Lines d="M4 2H16M8 9H16M0 16H16" /></FormatButton>
    </ButtonGroup>
    <ButtonGroup>
      <FormatButton aria-label="顶部"><Lines d="M1 2H15M2 8H14" /></FormatButton>
      <FormatButton $on aria-label="中部"><Lines d="M1 6H15M1 12H15" /></FormatButton>
      <FormatButton aria-label="底部"><Lines d="M2 10H14M2 16H14" /></FormatButton>
    </ButtonGroup>
    <BarSeparator />
    <MenuButton label="填充" icon={<FillIcon />} />
    <MenuButton label="阴影" icon={<ShadowIcon />} />
    <BarSeparator />
    <MenuButton label="线条颜色" icon={<LineColorIcon />} />
    <MenuButton label="线宽" icon={<LineWidthIcon />} />
    <MenuButton label="线型" icon={<LineStyleIcon />} />
    <MenuButton label="箭头" icon={<LineEndIcon />} disabled />
    <BarSeparator />
    <Coordinates>
      <label>x:<input defaultValue="76" /></label>
      <label>y:<input defaultValue="157" /></label>
      <label>w:<input defaultValue="204" /></label>
    </Coordinates>
  </FormatBar>
);

const LeftSide = () => (
  <Sidebar>
    <Pane title="页面"><PageActions /></Pane>
    <Tree>
      <TreeRow $root>
        <svg width="11" height="10"><path d="M0 10H10V0Z" fill="#444" /></svg>
        <PageIcon />Home
      </TreeRow>
      <TreeRow><PageIcon />Page 3</TreeRow>
      <TreeRow $on><PageIcon />Page 1</TreeRow>
      <TreeRow><PageIcon />Page 2</TreeRow>
    </Tree>
    <Pane title="Libraries">
      <button aria-label="部件库菜单"><ListIcon /></button>
      <button aria-label="搜索"><SearchIcon /></button>
    </Pane>
    <LibraryPicker>
      <Dropdown label="部件库" value="所有部件库" arrowColor="#000" $height={28} $font={15} $pad={4} $bg={panel} $arrow={5} />
    </LibraryPicker>
    <LibraryBody>
      <LibraryList>
        <SectionTitle $height={37} $left={12}><Chevron />Default &gt; Common</SectionTitle>
        <WidgetGrid>
          {WIDGETS.map(([name, icon]) => (
            <Widget key={name}><span>{icon}</span><span>{name}</span></Widget>
          ))}
        </WidgetGrid>
      </LibraryList>
      <ScrollBar size="10px" />
    </LibraryBody>
    <Pane title="母版"><PageActions /></Pane>
  </Sidebar>
);

const Close = () => (
  <svg width="10" height="10" stroke="#b2b2b2" strokeWidth="2.4"><path d="M1 1L9 9M9 1L1 9" /></svg>
);

const Center = () => (
  <Editor>
    <TabBar>
      <PageTab $on $width={87}>Page 1<Close /></PageTab>
      <PageTab $width={78}>Home<Close /></PageTab>
      <TabMenu aria-label="页面列表"><Caret size={12} /></TabMenu>
    </TabBar>
    <CanvasGrid>
      <Corner />
      <HorizontalRuler />
      <VerticalRuler />
      <Canvas>
        <Selection />
        <ShapeMenu>
          <ShapeGrid>
            {SHAPES.map(([name, d]) => (
              <button key={name} aria-label={name}>
                <svg width="31" height="31" viewBox="-.5 -.5 31 31" fill="none" stroke="#666"><path d={d} /></svg>
              </button>
            ))}
          </ShapeGrid>
          <ConvertButton>转换为自定义形状</ConvertButton>
        </ShapeMenu>
        <RedCircle />
      </Canvas>
      <ScrollBar size="18px" />
      <ScrollBar horizontal size="22px" />
    </CanvasGrid>
  </Editor>
);

const RightSide = () => (
  <Inspector>
    <Pane title="检查器: 矩形">
      <button aria-label="页面属性"><PageIcon width={14} height={17} stroke="#707070" strokeWidth={1.8} /></button>
    </Pane>
    <NameInput aria-label="名称" placeholder="(矩形 名称)" />
    <InspectorTabs>
      <InspectorTab $on>PROPERTIES</InspectorTab>
      <InspectorTab>NOTES</InspectorTab>
      <InspectorTab>STYLE</InspectorTab>
    </InspectorTabs>
    <InspectorBody>
      <Properties>
        <Block $line $bottom={19}>
          <SectionTitle><Chevron />交互</SectionTitle>
          <LinkPair>
            <Row $top={8} $indent={2}><PlusIcon /><Link href="#case">Add Case</Link></Row>
            <Row $top={8} $indent={2}><LinkIcon /><Link href="#link">Create Link</Link></Row>
          </LinkPair>
          <Row $small $height={27} $top={12} $indent={26} $gap={13}><EventIcon />鼠标单击时</Row>
          <Row $small $height={27} $indent={26} $gap={13}><EventIcon />鼠标移入时</Row>
          <Row $small $height={27} $indent={26} $gap={13}><EventIcon />鼠标移出时</Row>
          <Row $height={28} $top={20}>
            <Dropdown label="更多事件" value="更多事件" $height={28} $font={15} $pad={9} $bg="#f3f3f3" />
          </Row>
        </Block>
        <Block $line>
          <Row $small $height={46}>文本链接<LinkButton aria-label="文本链接"><LinkIcon color="#a9cfe0" /></LinkButton></Row>
        </Block>
        <Block $top={11}>
          <SectionTitle><Chevron />形状</SectionTitle>
          <Row $top={10} $height={28}>
            选择形状
            <ShapeButton aria-label="选择形状">
              <svg width="21" height="21"><rect x=".5" y=".5" width="20" height="20" fill="#fff" stroke="#777" /></svg>
              <Caret />
            </ShapeButton>
          </Row>
          <Row $top={14}>交互样式</Row>
          <Row $height={30} $indent={2}><StateIcon kind="over" /><Link href="#over">鼠标悬停时</Link></Row>
          <Row $height={31} $indent={2}><StateIcon kind="down" /><Link href="#down">鼠标按键按下时</Link></Row>
          <Row $height={31} $indent={2}><StateIcon kind="selected" /><Link href="#selected">选中</Link></Row>
          <Row $height={31} $indent={2}><StateIcon kind="disabled" /><Link href="#disabled">禁用</Link></Row>
          <Row $top={11}><Link href="#reference">参考页</Link></Row>
          <Check $top={12}><input type="checkbox" />禁用</Check>
          <Check $top={12}><input type="checkbox" />选中</Check>
          <Row as="label" htmlFor="group" $top={12}>指定选择组</Row>
          <GroupInput id="group" />
        </Block>
      </Properties>
      <ScrollBar size="calc(100% - 129px)" grip />
    </InspectorBody>
  </Inspector>
);

export default function App() {
  return (
    <>
      <GlobalStyle />
      <Window>
        <TitleBar>
          <Logo />
          <h1>未命名 - Axure RP 8 Enterprise Edition : Unlicensed</h1>
          <WindowButtons>
            <button aria-label="最小化"><svg width="14" height="14" stroke={gray}><path d="M1 6.500H13" /></svg></button>
            <button aria-label="最大化"><svg width="14" height="14" fill="none" stroke={gray}><rect x="1.500" y="1.500" width="11" height="11" /></svg></button>
            <button aria-label="关闭"><svg width="14" height="14" stroke={gray}><path d="M1 1L13 13M13 1L1 13" /></svg></button>
          </WindowButtons>
        </TitleBar>
        <MenuBar>{MENUS.map(m => <span key={m}>{m}</span>)}</MenuBar>
        <MainToolbar />
        <Formatting />
        <Workspace>
          <LeftSide />
          <Center />
          <RightSide />
        </Workspace>
      </Window>
    </>
  );
}
